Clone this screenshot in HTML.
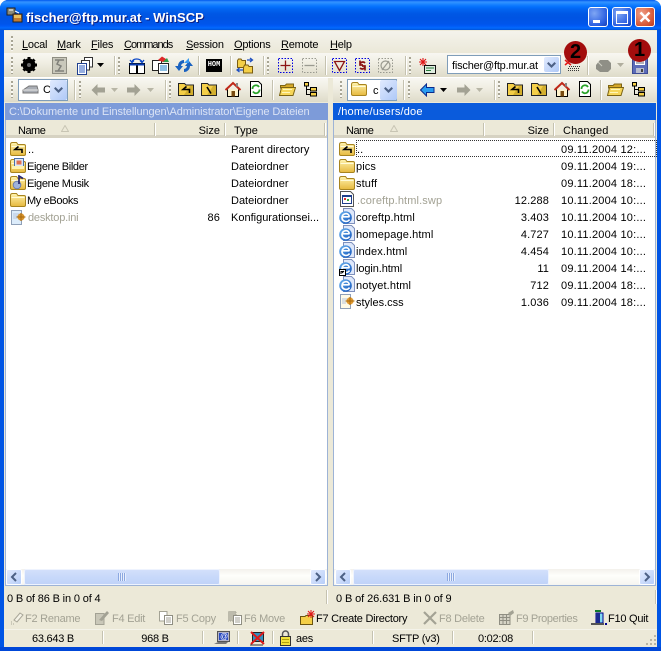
<!DOCTYPE html>
<html><head><meta charset="utf-8"><title>WinSCP</title>
<style>
html,body{margin:0;padding:0;background:#fff}
#w{position:relative;width:661px;height:651px;overflow:hidden;background:#0055e5;font:11px "Liberation Sans",sans-serif;color:#000;border-radius:8px 8px 0 0}
#w div,#w span,#w svg{position:absolute;white-space:nowrap}
.t{line-height:14px;letter-spacing:.12px;margin-top:2px}
.m{letter-spacing:-.2px;margin-top:1px}
.n{letter-spacing:-.36px}
.z{letter-spacing:0}
.f{letter-spacing:-.25px}
.r{text-align:right}
.g{color:#a3a294}
.tb{background:linear-gradient(#f8f7f2,#f0eee3 40%,#dedbc9)}
.sep{width:1px;background:#c5c2b0;border-right:1px solid #fff}
.grip{width:2px;background:repeating-linear-gradient(#a8a594 0 2px,#f8f7f2 2px 4px)}
u{text-decoration:underline}
</style></head><body><div id="w">
<svg width="0" height="0" style="left:0;top:0"><defs>
<linearGradient id="fo" x1="0" y1="0" x2="0" y2="1"><stop offset="0" stop-color="#fff4b0"/><stop offset="1" stop-color="#e6b93e"/></linearGradient>
<linearGradient id="ie" x1="0" y1="0" x2="1" y2="1"><stop offset="0" stop-color="#6fb6f2"/><stop offset="1" stop-color="#0d50b8"/></linearGradient>
<g id="folder"><path d="M.5 3.500Q.5 1.500 2.500 1.500H6.500L8 3.500H14Q15.500 3.500 15.500 5V13Q15.500 14.500 14 14.500H2Q.5 14.500 .5 13Z" fill="url(#fo)" stroke="#a8841e"/><path d="M1.500 5.500H14.500" stroke="#fffbd8"/></g>
<g id="upf"><use href="#folder"/><path d="M8.500 5.500L5 8.500 8.500 8.500M5.500 8.500H12V12" fill="none" stroke="#000" stroke-width="1.600"/></g>
<g id="pic"><use href="#folder"/><rect x="4.500" y=".5" width="9" height="8" fill="#dce8f8" stroke="#4a6fa8"/><rect x="6.500" y="2.500" width="5" height="4" fill="#e07050"/><path d="M2 8H14V11H2Z" fill="#fff3b0"/></g>
<g id="mus"><use href="#folder"/><circle cx="7" cy="10" r="3.800" fill="#9fb3dc" stroke="#6a7cb0"/><path d="M9 9V1L13 3.500" fill="none" stroke="#26266e" stroke-width="1.700"/></g>
<g id="ini"><path d="M1.500 1.500H11.500V15.500H1.500Z" fill="#dcecfb" stroke="#8fa0b8"/><path d="M3 5H9M3 7H8M3 9H7" stroke="#b7c6dc"/><circle cx="11" cy="8" r="3.600" fill="#d9942c"/><path d="M6.500 8H15.500M11 4V12" stroke="#a86a10"/></g>
<g id="css"><path d="M1.500 1.500H11.500V15.500H1.500Z" fill="#fffbe8" stroke="#8fa0b8"/><path d="M3 6H9M3 8H8M3 10H7" stroke="#b7c6dc"/><circle cx="11" cy="8" r="3.600" fill="#e19a30"/><path d="M6.500 8H15.500M11 4V12" stroke="#a86a10"/></g>
<g id="swp"><path d="M1.500 .5H11.500L14.500 3.500V15.500H1.500Z" fill="#fff" stroke="#555"/><rect x="3" y="4" width="10" height="9" fill="#20408c"/><rect x="4" y="6" width="8" height="6" fill="#fff"/><rect x="5" y="7" width="2" height="2" fill="#d33"/><rect x="8" y="8" width="2" height="2" fill="#3a3"/></g>
<g id="ie2"><path d="M4.500 .5H12.500L15.500 3.500V15.500H4.500Z" fill="#dfe8fa" stroke="#7f90bc"/><circle cx="6.500" cy="9.500" r="6.300" fill="url(#ie)"/><path d="M2.500 8.800H10.500M10.300 8.800C10 4.500 3.500 4.500 3 9.500 3 14 9 14.500 10.500 11.500" fill="none" stroke="#fff" stroke-width="1.700"/></g>
<g id="lnk"><use href="#ie2"/><rect x=".5" y="10.500" width="6" height="6" fill="#fff" stroke="#000"/><path d="M2 15V12.500H5M3 14L5 12" fill="none" stroke="#000"/></g>
<path id="barrow" d="M.5 7L6.500 1V4.500H14V9.500H6.500V13Z"/>
<path id="farrow" d="M14.500 7L8.500 1V4.500H1V9.500H8.500V13Z"/>
<g id="tup"><path d="M.5 2.500H6.500L8 4H15.500V14.500H.5Z" fill="#f4cf48" stroke="#222"/><path d="M12 5H15V14H6Z" fill="#b89518" opacity=".55"/><path d="M8.500 5.500L5 8.500H8M5.500 8.500H11.500V12" fill="none" stroke="#000" stroke-width="1.600"/></g>
<g id="troot"><path d="M.5 2.500H6.500L8 4H15.500V14.500H.5Z" fill="#f4cf48" stroke="#222"/><path d="M12 5H15V14H6Z" fill="#b89518" opacity=".55"/><path d="M6 6L10 12.500" stroke="#000" stroke-width="1.600"/></g>
<g id="home"><path d="M2.500 8.500V15.500H13.500V8.500" fill="#fff3cc" stroke="#000"/><path d="M.5 9L8 2 15.500 9" fill="none" stroke="#c02818" stroke-width="2"/><rect x="6.500" y="10" width="3.500" height="5.500" fill="#7a4c10"/><rect x="11" y="2" width="2" height="3.500" fill="#888"/></g>
<g id="rdoc"><path d="M2.500 .5H10.500L13.500 3.500V15.500H2.500Z" fill="#fff" stroke="#000"/><path d="M4.500 8A3.500 3.500 0 0 1 11 6M11.500 8.500A3.500 3.500 0 0 1 5 10.500" fill="none" stroke="#29a329" stroke-width="1.800"/></g>
<g id="open"><path d="M1.500 4.500H6L7.500 3H14.500V7H1.500Z" fill="#d6a828" stroke="#7c6414"/><path d="M.5 14.500L2.500 6.500H16.500L14 14.500Z" fill="#f6d65a" stroke="#7c6414"/><path d="M4 8.500H13M3 11.500H11" stroke="#fff6b8"/></g>
<g id="tree"><rect x="1.500" y="1.500" width="4" height="3.500" fill="#f4cf48" stroke="#000"/><rect x="7.500" y="6.500" width="6" height="3.500" fill="#f4cf48" stroke="#000"/><rect x="7.500" y="11.500" width="6" height="3.500" fill="#f4cf48" stroke="#000"/><path d="M3.500 5V13.500H7.500M3.500 8.500H7.500" fill="none" stroke="#000"/></g>
<g id="dev"><path d="M1 8L7 4H15L16 8V11H1Z" fill="#a9adb4" stroke="#777"/><path d="M1 8H16" stroke="#e6e6e6"/></g>
<path id="chev" d="M0 1.500L1.500 0 4.500 3 7.500 0 9 1.500 4.500 6Z" fill="#4d6185"/>
</defs></svg>

<!-- title bar -->
<div style="left:0;top:0;width:661px;height:30px;background:linear-gradient(#0058ee 0,#3593ff 2px,#288eff 3px,#127dff 5px,#036ffc 7px,#0262ee 10px,#0057e5 14px,#0054e3 18px,#0055eb 24px,#005bf5 26px,#026afe 28px,#0052d6 30px)"></div>
<svg width="18" height="18" style="left:6px;top:6px"><rect x="1" y="2" width="8" height="7" fill="#8a8a7a" stroke="#222"/><rect x="7" y="8" width="9" height="8" fill="#c07a30" stroke="#222"/><rect x="8" y="9" width="7" height="3" fill="#e8c060"/><path d="M3 4H7M9 5L13 7" stroke="#fff"/></svg>
<div style="left:26px;top:10px;font:bold 13px/15px 'Liberation Sans',sans-serif;color:#fff;text-shadow:1px 1px 0 #0f1f80;letter-spacing:.05px">fischer@ftp.mur.at - WinSCP</div>
<div style="left:588px;top:7px;width:18px;height:18px;border:1px solid #fff;border-radius:3px;background:radial-gradient(circle at 30% 30%,#7fa6f4,#2a5ee0 70%,#1a3fb0)"><span style="left:4px;top:12px;width:7px;height:3px;background:#fff"></span></div>
<div style="left:612px;top:7px;width:18px;height:18px;border:1px solid #fff;border-radius:3px;background:radial-gradient(circle at 30% 30%,#7fa6f4,#2a5ee0 70%,#1a3fb0)"><span style="left:3px;top:3px;width:10px;height:9px;border:1px solid #fff;border-top:3px solid #fff"></span></div>
<div style="left:635px;top:7px;width:18px;height:18px;border:1px solid #fff;border-radius:3px;background:radial-gradient(circle at 30% 30%,#f0a088,#d85a38 65%,#b83a20)"><svg width="18" height="18" style="left:0;top:0"><path d="M4.500 4.500L13.500 13.500M13.500 4.500L4.500 13.500" stroke="#fff" stroke-width="2.400"/></svg></div>

<!-- client -->
<div style="left:4px;top:30px;width:653px;height:617px;background:#ece9d8"></div>

<!-- menu -->
<div class="tb" style="left:4px;top:31px;width:653px;height:22px;background:linear-gradient(#f4f3ec,#ebe8d8)"></div>
<div class="grip" style="left:11px;top:36px;height:15px"></div>
<div class="t m" style="left:22px;top:37px"><u>L</u>ocal</div>
<div class="t m" style="left:57px;top:37px"><u>M</u>ark</div>
<div class="t m" style="left:91px;top:37px"><u>F</u>iles</div>
<div class="t m" style="left:124px;top:37px;letter-spacing:-1px"><u>C</u>ommands</div>
<div class="t m" style="left:186px;top:37px"><u>S</u>ession</div>
<div class="t m" style="left:234px;top:37px"><u>O</u>ptions</div>
<div class="t m" style="left:281px;top:37px"><u>R</u>emote</div>
<div class="t m" style="left:330px;top:37px"><u>H</u>elp</div>

<!-- toolbar row 2 -->
<div class="tb" style="left:4px;top:53px;width:653px;height:24px"></div>
<div style="left:4px;top:77px;width:653px;height:1px;background:#fff"></div>
<div class="grip" style="left:11px;top:57px;height:17px"></div>
<div class="grip" style="left:118px;top:57px;height:17px"></div>
<div class="grip" style="left:267px;top:57px;height:17px"></div>
<div class="grip" style="left:409px;top:57px;height:17px"></div>
<div class="sep" style="left:114px;top:56px;height:19px"></div>
<div class="sep" style="left:198px;top:56px;height:19px"></div>
<div class="sep" style="left:230px;top:56px;height:19px"></div>
<div class="sep" style="left:263px;top:56px;height:19px"></div>
<div class="sep" style="left:325px;top:56px;height:19px"></div>
<div class="sep" style="left:405px;top:56px;height:19px"></div>
<div class="sep" style="left:587px;top:56px;height:19px"></div>
<svg width="16" height="16" style="left:21px;top:57px"><circle cx="8" cy="8" r="6.500" fill="#000"/><path d="M8 0V16M0 8H16M2.500 2.500L13.500 13.500M13.500 2.500L2.500 13.500" stroke="#000" stroke-width="3"/><circle cx="8" cy="8" r="2" fill="#666"/></svg>
<svg width="16" height="18" style="left:52px;top:57px"><rect x=".5" y=".5" width="14" height="16" fill="#c9c8bb" stroke="#8e8d82"/><path d="M3 3H12M3 14H12M7 3L5 7 9 9 6 14" fill="none" stroke="#80807a" stroke-width="1.500"/></svg>
<svg width="18" height="18" style="left:76px;top:57px"><path d="M8.500 .5H16.500V10H8.500Z" fill="#fff" stroke="#333"/><path d="M5.500 3.500H13.500V13H5.500Z" fill="#fff" stroke="#333"/><path d="M1.500 6.500H10.500V17.500H1.500Z" fill="#fff" stroke="#1f3f8f"/><path d="M3 9H9M3 11H9M3 13H9M3 15H9" stroke="#2c5cc0"/></svg>
<svg width="7" height="4" style="left:97px;top:63px"><path d="M0 0H7L3.500 4Z"/></svg>
<svg width="18" height="18" style="left:128px;top:57px"><rect x="1.500" y="6.500" width="7" height="10" fill="#fff" stroke="#000"/><rect x="9.500" y="6.500" width="7" height="10" fill="#fff" stroke="#000"/><rect x="1.500" y="6.500" width="15" height="2" fill="#0a3cb0"/><path d="M4 5C5 1 12 1 14 5M2 3L4 5.500 6 3.500M12 3.500L14 5.500 16 3" fill="none" stroke="#0a46c8" stroke-width="1.300"/></svg>
<svg width="18" height="18" style="left:152px;top:56px"><rect x=".5" y="4.500" width="9" height="10" fill="#fff" stroke="#222"/><rect x="6.500" y="7.500" width="10" height="10" fill="#fff" stroke="#222"/><path d="M8 10H15M8 12H15M8 14H15" stroke="#1a7fc8"/><path d="M6 4L10 .5 14 3 15 6H11" fill="#dd2a2a"/><path d="M11 6L15 2 17 6Z" fill="#2aa04a"/></svg>
<svg width="18" height="18" style="left:175px;top:57px"><path d="M9 3A6 6 0 0 0 3 9H0L4 14 8 9H6A3.500 3.500 0 0 1 9 6Z" fill="#1a62c0"/><path d="M9 15A6 6 0 0 0 15 9H18L14 4 10 9H12A3.500 3.500 0 0 1 9 12Z" fill="#1a62c0"/><path d="M12 3L14 1V6H9Z" fill="#3a9af0"/></svg>
<div style="left:206px;top:59px;width:16px;height:13px;background:#000;color:#fff;font:bold 7px/13px 'Liberation Mono',monospace;text-align:center">HOM</div>
<svg width="18" height="18" style="left:236px;top:56px"><path d="M1.500 4.500V11.500H9.500V4.500H6L5 3H2.500Z" fill="#f4cf48" stroke="#7a5c10"/><path d="M7.500 11.500V17H16.500V10.500H13L12 9H8.500Z" fill="#f4cf48" stroke="#7a5c10"/><path d="M11 4H16M14 2L16.500 4 14 6" fill="none" stroke="#1f50c0" stroke-width="1.300"/><path d="M7 14H1.500M3.500 12L1 14 3.500 16" fill="none" stroke="#1f50c0" stroke-width="1.300"/></svg>
<svg width="17" height="17" style="left:277px;top:57px"><rect x="1.500" y="1.500" width="14" height="14" fill="none" stroke="#0000e0" stroke-dasharray="1.500 1.500"/><path d="M8.500 3.500V13.500M3.500 8.500H13.500" stroke="#8c1414" stroke-width="1.300"/></svg>
<svg width="17" height="17" style="left:301px;top:57px"><rect x="1.500" y="1.500" width="14" height="14" fill="none" stroke="#9a9a90" stroke-dasharray="1.500 1.500"/><path d="M3.500 8.500H13.500" stroke="#9a9a90" stroke-width="1.300"/></svg>
<svg width="17" height="17" style="left:331px;top:57px"><rect x="1.500" y="1.500" width="14" height="14" fill="none" stroke="#0000e0" stroke-dasharray="1.500 1.500"/><path d="M3.500 4.500H13.500L8.500 13.500Z" fill="none" stroke="#8c1414" stroke-width="1.300"/></svg>
<svg width="17" height="17" style="left:354px;top:57px"><rect x="1.500" y="1.500" width="14" height="14" fill="none" stroke="#0000e0" stroke-dasharray="1.500 1.500"/><path d="M11 6A3 3 0 0 0 6 7M6 3.500V8H9M6 11A3 3 0 0 0 11 10M11 13.500V9H8" fill="none" stroke="#8c1414" stroke-width="1.700"/></svg>
<svg width="17" height="17" style="left:377px;top:57px"><rect x="1.500" y="1.500" width="14" height="14" fill="none" stroke="#9a9a90" stroke-dasharray="1.500 1.500"/><circle cx="8.500" cy="8.500" r="4.500" fill="none" stroke="#9a9a90" stroke-width="1.200"/><path d="M5 13L12 4" stroke="#9a9a90" stroke-width="1.200"/></svg>
<svg width="18" height="18" style="left:418px;top:57px"><rect x="6.500" y="8.500" width="11" height="8" fill="#dfeee0" stroke="#111"/><path d="M8 11H16M8 13.500H13" stroke="#287a3a"/><path d="M5 1V9M1 5H9M2 2L8 8M8 2L2 8" stroke="#e01818" stroke-width="1.100"/></svg>
<!-- session combo -->
<div style="left:447px;top:55px;width:112px;height:17px;background:#fff;border:1px solid #7f9db9"></div>
<div class="t" style="left:452px;top:57px;letter-spacing:-.2px">fischer@ftp.mur.at</div>
<div style="left:544px;top:57px;width:15px;height:15px;background:linear-gradient(135deg,#e1eafe,#aec8f7);border-radius:2px"><svg width="9" height="6" style="left:3px;top:5px"><use href="#chev"/></svg></div>
<svg width="17" height="16" style="left:564px;top:58px"><path d="M1 2L7 7M7 2L1 7" stroke="#e01818" stroke-width="1.500"/><path d="M5 8.500H16M4 10.500H16M4 12.500H16" stroke="#333" stroke-width="1" stroke-dasharray="1 1"/></svg>
<svg width="18" height="16" style="left:595px;top:58px"><path d="M1 7L5 2H13L16 5V11L13 14H5L1 11Z" fill="#8f8f86"/><path d="M3 4L7 8" stroke="#d0d0c4"/></svg>
<svg width="7" height="4" style="left:617px;top:63px"><path d="M0 0H7L3.500 4Z" fill="#b0ae9e"/></svg>
<svg width="16" height="16" style="left:632px;top:58px"><path d="M.5 .5H15.500V15.500H.5Z" fill="#5b6bb8" stroke="#3c4a94"/><rect x="3" y="1" width="10" height="6" fill="#fff"/><path d="M4 3H12M4 5H12" stroke="#667"/><rect x="4" y="10" width="8" height="5" fill="#b8bcd0"/><rect x="9" y="11" width="2" height="3" fill="#444"/></svg>
<!-- badges -->
<div style="left:564px;top:41px;width:23px;height:23px;border-radius:50%;background:#a30d0d;color:#000;font:bold 20px/23px 'Liberation Sans',sans-serif;text-align:center">2</div>
<div style="left:628px;top:39px;width:23px;height:23px;border-radius:50%;background:#a30d0d;color:#000;font:bold 20px/23px 'Liberation Sans',sans-serif;text-align:center">1</div>

<!-- toolbar row 3 -->
<div class="tb" style="left:4px;top:78px;width:324px;height:24px"></div>
<div class="tb" style="left:333px;top:78px;width:324px;height:24px"></div>
<div style="left:328px;top:78px;width:5px;height:24px;background:#ece9d8"></div>
<div class="grip" style="left:11px;top:81px;height:17px"></div>
<div class="grip" style="left:79px;top:81px;height:17px"></div>
<div class="grip" style="left:169px;top:81px;height:17px"></div>
<div class="sep" style="left:74px;top:80px;height:20px"></div>
<div class="sep" style="left:165px;top:80px;height:20px"></div>
<div class="sep" style="left:272px;top:80px;height:20px"></div>
<div style="left:18px;top:79px;width:48px;height:20px;background:#fff;border:1px solid #7f9db9"></div>
<svg width="17" height="14" style="left:22px;top:82px"><use href="#dev"/></svg>
<div class="t" style="left:43px;top:81px">C</div>
<div style="left:50px;top:80px;width:17px;height:20px;background:linear-gradient(135deg,#e1eafe,#aec8f7);border-radius:2px"><svg width="9" height="6" style="left:4px;top:7px"><use href="#chev"/></svg></div>
<svg width="15" height="14" style="left:91px;top:83px" fill="#a3a294"><use href="#barrow"/></svg>
<svg width="7" height="4" style="left:111px;top:88px"><path d="M0 0H7L3.500 4Z" fill="#b8b6a6"/></svg>
<svg width="15" height="14" style="left:126px;top:83px" fill="#a3a294"><use href="#farrow"/></svg>
<svg width="7" height="4" style="left:147px;top:88px"><path d="M0 0H7L3.500 4Z" fill="#b8b6a6"/></svg>
<svg width="17" height="17" style="left:178px;top:81px"><use href="#tup"/></svg>
<svg width="17" height="17" style="left:201px;top:81px"><use href="#troot"/></svg>
<svg width="17" height="17" style="left:225px;top:81px"><use href="#home"/></svg>
<svg width="17" height="17" style="left:248px;top:81px"><use href="#rdoc"/></svg>
<svg width="17" height="17" style="left:279px;top:81px"><use href="#open"/></svg>
<svg width="15" height="17" style="left:303px;top:81px"><use href="#tree"/></svg>

<div class="grip" style="left:340px;top:81px;height:17px"></div>
<div class="grip" style="left:408px;top:81px;height:17px"></div>
<div class="grip" style="left:498px;top:81px;height:17px"></div>
<div class="sep" style="left:403px;top:80px;height:20px"></div>
<div class="sep" style="left:494px;top:80px;height:20px"></div>
<div class="sep" style="left:600px;top:80px;height:20px"></div>
<div style="left:347px;top:79px;width:48px;height:20px;background:#fff;border:1px solid #7f9db9"></div>
<svg width="17" height="17" style="left:351px;top:81px"><use href="#folder"/></svg>
<div class="t" style="left:373px;top:82px">c</div>
<div style="left:380px;top:80px;width:17px;height:20px;background:linear-gradient(135deg,#e1eafe,#aec8f7);border-radius:2px"><svg width="9" height="6" style="left:4px;top:7px"><use href="#chev"/></svg></div>
<svg width="15" height="14" style="left:420px;top:83px" fill="#2a9cf0" stroke="#0a2a8c"><use href="#barrow"/></svg>
<svg width="7" height="4" style="left:440px;top:88px"><path d="M0 0H7L3.500 4Z"/></svg>
<svg width="15" height="14" style="left:456px;top:83px" fill="#a3a294"><use href="#farrow"/></svg>
<svg width="7" height="4" style="left:476px;top:88px"><path d="M0 0H7L3.500 4Z" fill="#b8b6a6"/></svg>
<svg width="17" height="17" style="left:507px;top:81px"><use href="#tup"/></svg>
<svg width="17" height="17" style="left:531px;top:81px"><use href="#troot"/></svg>
<svg width="17" height="17" style="left:554px;top:81px"><use href="#home"/></svg>
<svg width="17" height="17" style="left:577px;top:81px"><use href="#rdoc"/></svg>
<svg width="17" height="17" style="left:607px;top:81px"><use href="#open"/></svg>
<svg width="15" height="17" style="left:631px;top:81px"><use href="#tree"/></svg>

<!-- path bars -->
<div style="left:5px;top:103px;width:323px;height:17px;background:#7d9bd9"></div>
<div class="t" style="left:9px;top:103px;color:#dbe3f5;letter-spacing:-.11px">C:\Dokumente und Einstellungen\Administrator\Eigene Dateien</div>
<div style="left:333px;top:103px;width:323px;height:17px;background:#0a5bdc"></div>
<div class="t" style="left:338px;top:103px;color:#fff;letter-spacing:.18px">/home/users/doe</div>

<!-- left panel -->
<div style="left:5px;top:120px;width:323px;height:466px;background:#fff;box-sizing:border-box;border-left:1px solid #9db3d6;border-right:1px solid #9db3d6;border-bottom:1px solid #9db3d6"></div>
<div style="left:6px;top:120px;width:321px;height:15px;background:#ece9d8;border-bottom:3px solid #d6d2c2"></div>
<div class="t n" style="left:18px;top:122px;letter-spacing:-.5px">Name</div>
<svg width="8" height="7" style="left:61px;top:125px"><path d="M4 .5L7.500 6.500H.5Z" fill="none" stroke="#c8c5b4"/></svg>
<div class="sep" style="left:154px;top:123px;height:13px"></div>
<div class="t r z" style="left:170px;top:122px;width:50px">Size</div>
<div class="sep" style="left:224px;top:123px;height:13px"></div>
<div class="t z" style="left:234px;top:122px">Type</div>
<div class="sep" style="left:324px;top:123px;height:13px"></div>

<svg width="16" height="16" style="left:10px;top:141px"><use href="#upf"/></svg>
<div class="t" style="left:28px;top:141px">..</div><div class="t" style="left:231px;top:141px;letter-spacing:.05px">Parent directory</div>
<svg width="16" height="16" style="left:10px;top:158px"><use href="#pic"/></svg>
<div class="t n" style="left:27px;top:158px">Eigene Bilder</div><div class="t z" style="left:231px;top:158px">Dateiordner</div>
<svg width="16" height="16" style="left:10px;top:175px"><use href="#mus"/></svg>
<div class="t n" style="left:27px;top:175px">Eigene Musik</div><div class="t z" style="left:231px;top:175px">Dateiordner</div>
<svg width="16" height="16" style="left:10px;top:192px"><use href="#folder"/></svg>
<div class="t n" style="left:27px;top:192px">My eBooks</div><div class="t z" style="left:231px;top:192px">Dateiordner</div>
<svg width="17" height="17" style="left:10px;top:209px"><use href="#ini"/></svg>
<div class="t g" style="left:28px;top:209px;letter-spacing:-.2px">desktop.ini</div><div class="t r" style="left:170px;top:209px;width:50px">86</div><div class="t z" style="left:231px;top:209px">Konfigurationsei...</div>

<!-- right panel -->
<div style="left:333px;top:120px;width:323px;height:466px;background:#fff;box-sizing:border-box;border-left:1px solid #9db3d6;border-right:1px solid #9db3d6;border-bottom:1px solid #9db3d6"></div>
<div style="left:334px;top:120px;width:321px;height:15px;background:#ece9d8;border-bottom:3px solid #d6d2c2"></div>
<div class="t n" style="left:346px;top:122px;letter-spacing:-.5px">Name</div>
<svg width="8" height="7" style="left:390px;top:125px"><path d="M4 .5L7.500 6.500H.5Z" fill="none" stroke="#c8c5b4"/></svg>
<div class="sep" style="left:483px;top:123px;height:13px"></div>
<div class="t r z" style="left:499px;top:122px;width:50px">Size</div>
<div class="sep" style="left:553px;top:123px;height:13px"></div>
<div class="t" style="left:563px;top:122px">Changed</div>
<div class="sep" style="left:653px;top:123px;height:13px"></div>
<div style="left:356px;top:140px;width:299px;height:15px;border:1px dotted #333"></div>

<svg width="16" height="16" style="left:339px;top:141px"><use href="#upf"/></svg>
<div class="t" style="left:357px;top:141px">..</div><div class="t" style="left:561px;top:141px;letter-spacing:.2px">09.11.2004 12:...</div>
<svg width="16" height="16" style="left:339px;top:158px"><use href="#folder"/></svg>
<div class="t" style="left:356px;top:158px">pics</div><div class="t" style="left:561px;top:158px;letter-spacing:.2px">09.11.2004 19:...</div>
<svg width="16" height="16" style="left:339px;top:175px"><use href="#folder"/></svg>
<div class="t" style="left:356px;top:175px">stuff</div><div class="t" style="left:561px;top:175px;letter-spacing:.2px">09.11.2004 18:...</div>
<svg width="16" height="17" style="left:339px;top:191px"><use href="#swp"/></svg>
<div class="t g" style="left:357px;top:192px">.coreftp.html.swp</div><div class="t r" style="left:499px;top:192px;width:50px">12.288</div><div class="t" style="left:561px;top:192px;letter-spacing:.2px">10.11.2004 10:...</div>
<svg width="17" height="17" style="left:339px;top:208px"><use href="#ie2"/></svg>
<div class="t" style="left:356px;top:209px">coreftp.html</div><div class="t r" style="left:499px;top:209px;width:50px">3.403</div><div class="t" style="left:561px;top:209px;letter-spacing:.2px">10.11.2004 10:...</div>
<svg width="17" height="17" style="left:339px;top:225px"><use href="#ie2"/></svg>
<div class="t" style="left:356px;top:226px">homepage.html</div><div class="t r" style="left:499px;top:226px;width:50px">4.727</div><div class="t" style="left:561px;top:226px;letter-spacing:.2px">10.11.2004 10:...</div>
<svg width="17" height="17" style="left:339px;top:242px"><use href="#ie2"/></svg>
<div class="t" style="left:356px;top:243px">index.html</div><div class="t r" style="left:499px;top:243px;width:50px">4.454</div><div class="t" style="left:561px;top:243px;letter-spacing:.2px">10.11.2004 10:...</div>
<svg width="17" height="17" style="left:339px;top:259px"><use href="#lnk"/></svg>
<div class="t" style="left:356px;top:260px;letter-spacing:-.1px">login.html</div><div class="t r" style="left:499px;top:260px;width:50px">11</div><div class="t" style="left:561px;top:260px;letter-spacing:.2px">09.11.2004 14:...</div>
<svg width="17" height="17" style="left:339px;top:276px"><use href="#ie2"/></svg>
<div class="t" style="left:356px;top:277px">notyet.html</div><div class="t r" style="left:499px;top:277px;width:50px">712</div><div class="t" style="left:561px;top:277px;letter-spacing:.2px">09.11.2004 18:...</div>
<svg width="17" height="17" style="left:339px;top:293px"><use href="#css"/></svg>
<div class="t" style="left:356px;top:294px;letter-spacing:0">styles.css</div><div class="t r" style="left:499px;top:294px;width:50px">1.036</div><div class="t" style="left:561px;top:294px;letter-spacing:.2px">09.11.2004 18:...</div>

<!-- scrollbars -->
<div style="left:6px;top:569px;width:321px;height:16px;background:linear-gradient(#f3f1ec,#fefefb 40%,#f6f5f0)"></div>
<div style="left:6px;top:569px;width:16px;height:16px;border-radius:2px;background:linear-gradient(135deg,#e4ecfe,#b4ccf8);box-shadow:inset 0 0 0 1px #fff"><svg width="8" height="10" style="left:4px;top:3px"><path d="M6 1L2 5 6 9" fill="none" stroke="#4d6185" stroke-width="2"/></svg></div>
<div style="left:24px;top:569px;width:196px;height:16px;border-radius:2px;background:linear-gradient(#d4e1fb,#c8d9fa 50%,#bfd2f8);box-shadow:inset 0 0 0 1px #eef3fe"><span style="left:94px;top:4px;width:8px;height:8px;background:repeating-linear-gradient(90deg,#8ca8e0 0 1px,#e8effd 1px 2px)"></span></div>
<div style="left:310px;top:569px;width:16px;height:16px;border-radius:2px;background:linear-gradient(135deg,#e4ecfe,#b4ccf8);box-shadow:inset 0 0 0 1px #fff"><svg width="8" height="10" style="left:4px;top:3px"><path d="M2 1L6 5 2 9" fill="none" stroke="#4d6185" stroke-width="2"/></svg></div>

<div style="left:334px;top:569px;width:321px;height:16px;background:linear-gradient(#f3f1ec,#fefefb 40%,#f6f5f0)"></div>
<div style="left:335px;top:569px;width:16px;height:16px;border-radius:2px;background:linear-gradient(135deg,#e4ecfe,#b4ccf8);box-shadow:inset 0 0 0 1px #fff"><svg width="8" height="10" style="left:4px;top:3px"><path d="M6 1L2 5 6 9" fill="none" stroke="#4d6185" stroke-width="2"/></svg></div>
<div style="left:353px;top:569px;width:196px;height:16px;border-radius:2px;background:linear-gradient(#d4e1fb,#c8d9fa 50%,#bfd2f8);box-shadow:inset 0 0 0 1px #eef3fe"><span style="left:94px;top:4px;width:8px;height:8px;background:repeating-linear-gradient(90deg,#8ca8e0 0 1px,#e8effd 1px 2px)"></span></div>
<div style="left:639px;top:569px;width:16px;height:16px;border-radius:2px;background:linear-gradient(135deg,#e4ecfe,#b4ccf8);box-shadow:inset 0 0 0 1px #fff"><svg width="8" height="10" style="left:4px;top:3px"><path d="M2 1L6 5 2 9" fill="none" stroke="#4d6185" stroke-width="2"/></svg></div>

<!-- status lines -->
<div class="t" style="left:7px;top:590px;letter-spacing:-.15px">0 B of 86 B in 0 of 4</div>
<div class="sep" style="left:326px;top:590px;height:14px"></div>
<div class="t" style="left:336px;top:590px;letter-spacing:-.1px">0 B of 26.631 B in 0 of 9</div>
<div class="sep" style="left:655px;top:590px;height:14px"></div>

<!-- function keys -->
<svg width="16" height="16" style="left:10px;top:610px"><path d="M4 10L10 3 13 5 7 12Z" fill="#f4f2e6" stroke="#a8a698"/><path d="M1 14H2M3 14H4M1 12H2" stroke="#a8a698"/></svg>
<div class="t g f" style="left:25px;top:610px">F2 Rename</div>
<svg width="17" height="17" style="left:94px;top:609px"><path d="M1.500 4.500H10V15.500H1.500Z" fill="#c9c7b8" stroke="#a3a294"/><path d="M5 11L13 2 15 4 8 12Z" fill="#a3a294"/></svg>
<div class="t g f" style="left:112px;top:610px">F4 Edit</div>
<svg width="17" height="17" style="left:158px;top:609px"><path d="M1.500 2.500H9V12H1.500Z" fill="#fff" stroke="#a3a294"/><path d="M6.500 6.500H14.500V15.500H6.500Z" fill="#fff" stroke="#8f8e82"/><path d="M8 9H13M8 11H13M8 13H13" stroke="#a3a294"/></svg>
<div class="t g f" style="left:176px;top:610px">F5 Copy</div>
<svg width="17" height="17" style="left:227px;top:609px"><path d="M1.500 2.500H9V12H1.500Z" fill="#bdbbac" stroke="#a3a294" stroke-dasharray="1 1"/><path d="M6.500 6.500H14.500V15.500H6.500Z" fill="#fff" stroke="#8f8e82"/><path d="M8 9H13M8 11H13M8 13H13" stroke="#a3a294"/></svg>
<div class="t g f" style="left:244px;top:610px">F6 Move</div>
<svg width="18" height="17" style="left:299px;top:609px"><path d="M1.500 7.500H6L7 6.500H13.500V15.500H1.500Z" fill="#f4cf48" stroke="#6a5410"/><path d="M12 1V9M8 5H16M9 2L15 8M15 2L9 8" stroke="#e01818"/></svg>
<div class="t" style="left:316px;top:610px;letter-spacing:-.25px">F7 Create Directory</div>
<svg width="16" height="16" style="left:422px;top:610px"><path d="M2 2L14 14M14 2L2 14" stroke="#a3a294" stroke-width="2.200"/></svg>
<div class="t g f" style="left:439px;top:610px">F8 Delete</div>
<svg width="17" height="17" style="left:498px;top:609px"><path d="M1.500 5.500H12V15.500H1.500Z" fill="#d5d3c5" stroke="#8f8e82"/><path d="M1.500 8.500H12M1.500 11.500H12M5 5.500V15.500M8.500 5.500V15.500" stroke="#8f8e82"/><path d="M10 4L15 1 16 4 12 7Z" fill="#a3a294"/></svg>
<div class="t g" style="left:516px;top:610px;letter-spacing:-.35px">F9 Properties</div>
<svg width="17" height="17" style="left:591px;top:609px"><rect x="4" y="1" width="6" height="2" fill="#0f7a2a"/><path d="M5 4H12V14H5Z" fill="#7fd8f2" stroke="#00008c"/><path d="M5 4H9V14H5Z" fill="#1a2a90"/><path d="M0 15H13" stroke="#555" stroke-width="2"/><path d="M14 15H16" stroke="#00008c" stroke-width="2"/></svg>
<div class="t f" style="left:608px;top:610px">F10 Quit</div>

<!-- status bar -->
<div style="left:4px;top:629px;width:653px;height:18px;background:#ece9d8;border-top:1px solid #f4f3ea;box-sizing:border-box"></div>
<div class="t f" style="left:10px;top:630px;width:86px;text-align:center">63.643 B</div>
<div class="sep" style="left:102px;top:631px;height:13px"></div>
<div class="t f" style="left:110px;top:630px;width:90px;text-align:center">968 B</div>
<div class="sep" style="left:202px;top:631px;height:13px"></div>
<svg width="17" height="16" style="left:214px;top:630px"><rect x="3.500" y="1.500" width="12" height="10" fill="#b4b4c8" stroke="#555"/><rect x="5" y="3" width="9" height="7" fill="#2a4ac0"/><text x="6" y="9" font-size="8" fill="#fff" font-family="Liberation Sans">@</text><path d="M0 14H12L14 12H4Z" fill="#777"/></svg>
<div class="sep" style="left:237px;top:631px;height:13px"></div>
<svg width="17" height="17" style="left:249px;top:630px"><rect x="3.500" y="2.500" width="11" height="9" fill="#3090c0" stroke="#222"/><path d="M2 2L15 14M15 2L2 14" stroke="#e01818" stroke-width="2"/><path d="M1 15H14" stroke="#333"/></svg>
<div class="sep" style="left:272px;top:631px;height:13px"></div>
<svg width="13" height="16" style="left:279px;top:630px"><path d="M3.500 7V4A3 3 0 0 1 9.500 4V7" fill="none" stroke="#555" stroke-width="1.500"/><rect x="1.500" y="6.500" width="10" height="9" fill="#f2e23c" stroke="#333"/><path d="M3 9.500H10M3 12.500H10" stroke="#b0a010"/></svg>
<div class="t f" style="left:296px;top:630px">aes</div>
<div class="sep" style="left:372px;top:631px;height:13px"></div>
<div class="t f" style="left:392px;top:630px">SFTP (v3)</div>
<div class="sep" style="left:452px;top:631px;height:13px"></div>
<div class="t f" style="left:478px;top:630px">0:02:08</div>
<div class="sep" style="left:532px;top:631px;height:13px"></div>
<svg width="12" height="12" style="left:645px;top:634px"><path d="M9 1H11V3H9ZM5 5H7V7H5ZM9 5H11V7H9ZM1 9H3V11H1ZM5 9H7V11H5ZM9 9H11V11H9Z" fill="#b8b5a4"/></svg>

<!-- bottom border -->
<div style="left:0;top:647px;width:661px;height:4px;background:#0047d8"></div>
</div></body></html>
